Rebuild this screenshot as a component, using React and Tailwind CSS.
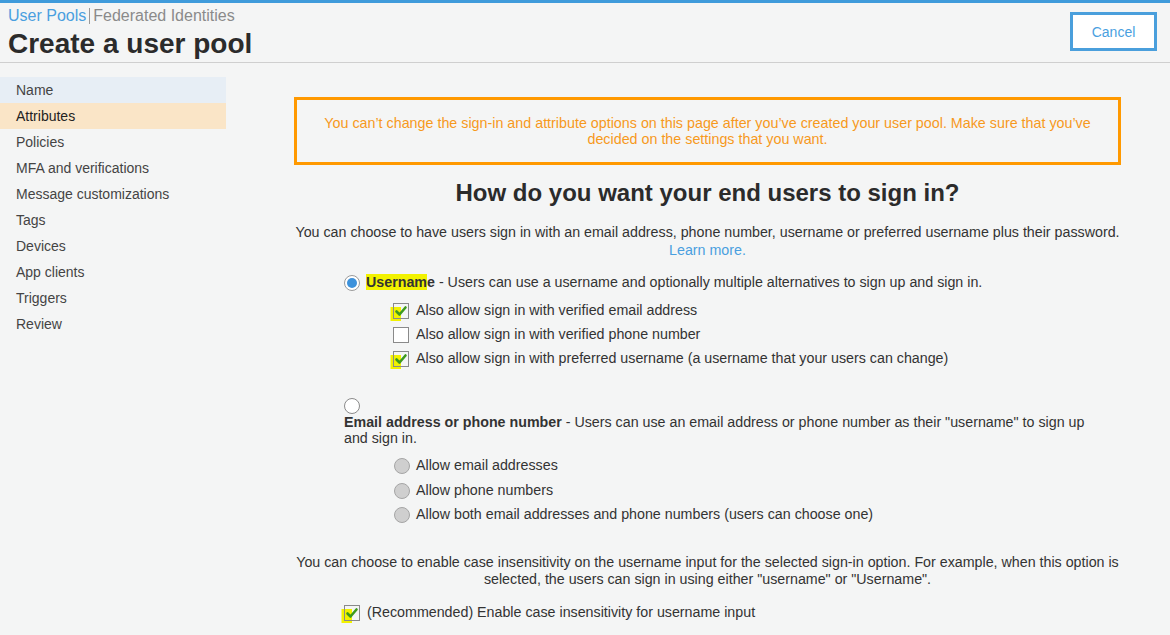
import React from 'react';

const font = { fontFamily: '"Liberation Sans", Arial, sans-serif' };

function CheckBox({ checked, marked }) {
  return (
    <svg width="16" height="16" viewBox="0 0 16 16" className="block shrink-0 overflow-visible">
      {marked && <rect x="-2.5" y="4" width="10.5" height="14" fill="#f2f200" />}
      <rect x="0.5" y="0.5" width="15" height="15" fill={marked ? 'none' : '#fff'} stroke="#8a8a8a" />
      {checked && (
        <path d="M3.5 8.5 L6.5 11.5 L12.5 4.5" fill="none" stroke="#3d9a1e" strokeWidth="2.6" strokeLinecap="round" strokeLinejoin="round" />
      )}
    </svg>
  );
}

function Radio({ variant }) {
  if (variant === 'on') {
    return (
      <svg width="16" height="16" viewBox="0 0 16 16" className="block shrink-0">
        <circle cx="8" cy="8" r="7.5" fill="#fff" stroke="#9a9a9a" />
        <circle cx="8" cy="8" r="5" fill="#3d92db" />
      </svg>
    );
  }
  if (variant === 'gray') {
    return (
      <svg width="16" height="16" viewBox="0 0 16 16" className="block shrink-0">
        <circle cx="8" cy="8" r="7.5" fill="#cfcfcf" stroke="#a5a5a5" />
      </svg>
    );
  }
  return (
    <svg width="16" height="16" viewBox="0 0 16 16" className="block shrink-0">
      <circle cx="8" cy="8" r="7.5" fill="#fff" stroke="#8a8a8a" />
    </svg>
  );
}

const navItems = [
  'Name',
  'Attributes',
  'Policies',
  'MFA and verifications',
  'Message customizations',
  'Tags',
  'Devices',
  'App clients',
  'Triggers',
  'Review',
];

export default function App() {
  return (
    <div className="w-[1170px] h-[635px] overflow-hidden bg-[#f4f5f5] text-[#333] text-[14px]" style={font}>
      {/* Top bar */}
      <div className="h-[3px] bg-[#3f9bdb]" />

      {/* Header */}
      <div className="h-[60px] border-b border-[#cfcfcf] flex justify-between pl-2 pr-[13px]">
        <div className="pt-[4px]">
          <div className="flex items-center text-[16px] leading-[18px]">
            <span className="text-[#4a9fdf]">User Pools</span>
            <span className="mx-[3px] h-[16px] border-l border-[#999]" />
            <span className="text-[#8a8a8a]">Federated Identities</span>
          </div>
          <h1 className="mt-[3px] text-[28px] leading-[32px] font-bold text-[#2b2b2b]">Create a user pool</h1>
        </div>
        <button className="mt-[9px] w-[87px] h-[39px] pt-[2px] border-[3px] border-[#4a9fdc] bg-white text-[#4a9fdf] text-[14px]">
          Cancel
        </button>
      </div>

      <div className="flex">
        {/* Sidebar */}
        <div className="w-[226px] mt-[14px] shrink-0">
          {navItems.map((item) => (
            <div
              key={item}
              className={
                'h-[26px] leading-[26px] pl-4 ' +
                (item === 'Name'
                  ? 'bg-[#e7eef5] text-[#444]'
                  : item === 'Attributes'
                  ? 'bg-[#fae5c7] text-[#222]'
                  : 'text-[#444]')
              }
            >
              {item}
            </div>
          ))}
        </div>

        {/* Main */}
        <div className="ml-[68px] mt-[34px] w-[827px] text-[14.25px]">
          <div className="border-[3px] border-[#ff9900] py-[15px] px-5 text-center text-[#f7991c] text-[14.3px] leading-[16px]">
            You can’t change the sign-in and attribute options on this page after you’ve created your user pool. Make sure that you’ve decided on the settings that you want.
          </div>

          <h2 className="mt-[14px] text-center text-[24px] leading-[28px] font-bold text-[#2b2b2b]">
            How do you want your end users to sign in?
          </h2>

          <p className="mt-[16px] text-center leading-[18px]">
            You can choose to have users sign in with an email address, phone number, username or preferred username plus their password.
            <br />
            <span className="text-[#4a9fdf]">Learn more.</span>
          </p>

          <div className="ml-[50px] mt-[14px]">
            <div className="flex items-center gap-[6px] h-[20px]">
              <Radio variant="on" />
              <span>
                <b className="bg-[#f2f200]">Usernam</b>
                <b>e</b> - Users can use a username and optionally multiple alternatives to sign up and sign in.
              </span>
            </div>

            <div className="ml-[49px] mt-[6px]">
              <div className="flex items-center gap-[7px] h-[24px]">
                <CheckBox checked marked />
                <span>Also allow sign in with verified email address</span>
              </div>
              <div className="flex items-center gap-[7px] h-[24px]">
                <CheckBox />
                <span>Also allow sign in with verified phone number</span>
              </div>
              <div className="flex items-center gap-[7px] h-[24px]">
                <CheckBox checked marked />
                <span>Also allow sign in with preferred username (a username that your users can change)</span>
              </div>
            </div>

            <div className="mt-[27px] w-[752px]">
              <Radio />
              <p className="leading-[16px]">
                <b>Email address or phone number</b> - Users can use an email address or phone number as their "username" to sign up and sign in.
              </p>
            </div>

            <div className="ml-[50px] mt-[7px]">
              <div className="flex items-center gap-[6px] h-[25px]">
                <Radio variant="gray" />
                <span>Allow email addresses</span>
              </div>
              <div className="flex items-center gap-[6px] h-[25px]">
                <Radio variant="gray" />
                <span>Allow phone numbers</span>
              </div>
              <div className="flex items-center gap-[6px] h-[24px]">
                <Radio variant="gray" />
                <span>Allow both email addresses and phone numbers (users can choose one)</span>
              </div>
            </div>
          </div>

          <p className="mt-[27px] text-center leading-[17px]">
            You can choose to enable case insensitivity on the username input for the selected sign-in option. For example, when this option is selected, the users can sign in using either "username" or "Username".
          </p>

          <div className="ml-[50px] mt-[15px] flex items-center gap-[7px] h-[20px]">
            <CheckBox checked marked />
            <span>(Recommended) Enable case insensitivity for username input</span>
          </div>
        </div>
      </div>
    </div>
  );
}
